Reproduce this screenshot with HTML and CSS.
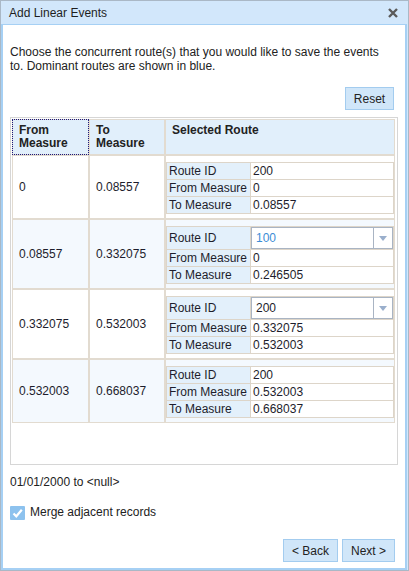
FILE: index.html
```html
<!DOCTYPE html>
<html>
<head>
<meta charset="utf-8">
<title>Add Linear Events</title>
<link rel="stylesheet" href="styles.css">
</head>
<body>
<div class="window">
  <div class="titlebar">
    <span class="title">Add Linear Events</span>
    <svg class="close" width="10" height="10" viewBox="0 0 10 10"><path d="M1 1L9 9M9 1L1 9" stroke="#5a5a5a" stroke-width="2.4" fill="none"/></svg>
  </div>
  <div class="body">
    <p class="intro">Choose the concurrent route(s) that you would like to save the events to. Dominant routes are shown in blue.</p>
    <div class="toolbar"><button class="btn reset">Reset</button></div>
    <div class="frame">
      <table class="grid">
        <colgroup><col class="c1"><col class="c2"><col class="c3"></colgroup>
        <thead>
          <tr><th class="focus">From<br>Measure</th><th>To<br>Measure</th><th>Selected Route</th></tr>
        </thead>
        <tbody>
          <tr>
            <td>0</td><td>0.08557</td>
            <td class="sel">
              <table class="route">
                <tr><td class="lab">Route ID</td><td>200</td></tr>
                <tr><td class="lab">From Measure</td><td>0</td></tr>
                <tr><td class="lab">To Measure</td><td>0.08557</td></tr>
              </table>
            </td>
          </tr>
          <tr class="alt">
            <td>0.08557</td><td>0.332075</td>
            <td class="sel">
              <table class="route">
                <tr class="drop"><td class="lab">Route ID</td><td class="selcell"><div class="select"><span class="val blue">100</span><span class="arrow"><svg width="8" height="5" viewBox="0 0 8 5"><path d="M0 0H8L4 5Z" fill="#9aafcc"/></svg></span></div></td></tr>
                <tr><td class="lab">From Measure</td><td>0</td></tr>
                <tr><td class="lab">To Measure</td><td>0.246505</td></tr>
              </table>
            </td>
          </tr>
          <tr>
            <td>0.332075</td><td>0.532003</td>
            <td class="sel">
              <table class="route">
                <tr class="drop"><td class="lab">Route ID</td><td class="selcell"><div class="select"><span class="val">200</span><span class="arrow"><svg width="8" height="5" viewBox="0 0 8 5"><path d="M0 0H8L4 5Z" fill="#9aafcc"/></svg></span></div></td></tr>
                <tr><td class="lab">From Measure</td><td>0.332075</td></tr>
                <tr><td class="lab">To Measure</td><td>0.532003</td></tr>
              </table>
            </td>
          </tr>
          <tr class="alt">
            <td>0.532003</td><td>0.668037</td>
            <td class="sel">
              <table class="route">
                <tr><td class="lab">Route ID</td><td>200</td></tr>
                <tr><td class="lab">From Measure</td><td>0.532003</td></tr>
                <tr><td class="lab">To Measure</td><td>0.668037</td></tr>
              </table>
            </td>
          </tr>
        </tbody>
      </table>
    </div>
    <div class="date">01/01/2000 to &lt;null&gt;</div>
    <label class="merge">
      <span class="check"><svg width="15" height="14" viewBox="0 0 15 14"><path d="M3.5 7.5L6.3 10.3L11.8 3.8" stroke="#fff" stroke-width="2.2" fill="none"/></svg></span>
      <span class="merge-text">Merge adjacent records</span>
    </label>
    <div class="actions">
      <button class="btn back">&lt; Back</button>
      <button class="btn next">Next &gt;</button>
    </div>
  </div>
</div>
</body>
</html>
```
FILE: styles.css
```css
* { box-sizing: border-box; }
html, body { margin: 0; padding: 0; }
body {
  font-family: "Liberation Sans", Arial, sans-serif;
  font-size: 12px;
  color: #222;
  background: #fff;
}
.window {
  width: 409px;
  height: 571px;
  border: 1px solid #aab8c6;
  background: #d2e7fb;
  display: flex;
  flex-direction: column;
}
.titlebar {
  height: 23px;
  flex: none;
  display: flex;
  align-items: center;
  justify-content: space-between;
  padding: 0 10px 0 8px;
}
.title { color: #1e1e1e; }
.close { display: block; }
.body {
  flex: 1;
  background: #fff;
  border: 2px solid #a6d0f4;
  border-top-width: 1px;
  margin-right: 1px;
  display: flex;
  flex-direction: column;
  padding: 0 7px 6px 7px;
}
.intro {
  margin: 20px 0 0;
  line-height: 14px;
  width: 380px;
}
.toolbar {
  display: flex;
  justify-content: flex-end;
  margin-top: 14px;
  padding-right: 4px;
}
.btn {
  height: 23px;
  background: #d0e6f9;
  border: 1px solid #a3ccef;
  font-family: inherit;
  font-size: 12px;
  color: #222;
  padding: 0;
  border-radius: 0;
}
.reset { width: 49px; }
.frame {
  margin-top: 7px;
  height: 348px;
  flex: none;
  border: 1px solid #d6d6d6;
  padding: 1px 0 0 1px;
}
.grid {
  border-collapse: separate;
  border-spacing: 0;
  width: 383px;
  table-layout: fixed;
}
.c1 { width: 77px; }
.c2 { width: 76px; }
.c3 { width: 230px; }
.grid > thead > tr > th,
.grid > tbody > tr > td {
  border: 1px solid #e2dbd0;
}
.grid > thead > tr > th {
  background: #e1effb;
  text-align: left;
  vertical-align: top;
  font-weight: bold;
  padding: 4px 6px;
  line-height: 13px;
  height: 36px;
}
.grid > thead > tr > th.focus {
  outline: 1px dotted #1a1a80;
  outline-offset: -1px;
}
.grid > tbody > tr > td {
  padding: 0 6px;
  vertical-align: middle;
  color: #1d1d2c;
}
.grid > tbody > tr.alt > td { background: #f4f9fe; }
.grid > tbody > tr > td.sel {
  padding: 6px 0 4px 0;
}
.route {
  width: 100%;
  border-collapse: collapse;
  table-layout: fixed;
}
.route td {
  border: 1px solid #ddd5c9;
  height: 17px;
  padding: 0 2px;
  line-height: 15px;
  background: #fff;
  white-space: nowrap;
  color: #1d1d2c;
}
.route td.lab {
  width: 84px;
  background: #e3f0fb;
}
.route tr.drop td { height: 23px; }
.route td.selcell { padding: 0; }
.select {
  display: flex;
  height: 22px;
  border: 1px solid #a9b4c3;
  background: #fff;
}
.select .val {
  flex: 1;
  padding-left: 4px;
  line-height: 20px;
}
.blue { color: #3c8dd6; }
.select .arrow {
  width: 19px;
  border-left: 1px solid #a9b4c3;
  display: flex;
  align-items: center;
  justify-content: center;
}
.date {
  margin-top: 10px;
  line-height: 14px;
}
.merge {
  display: flex;
  align-items: flex-start;
  gap: 5px;
  margin-top: 17px;
}
.check {
  width: 15px;
  height: 14px;
  background: #8dc2ee;
  border-radius: 1px;
  display: block;
}
.check svg { display: block; }
.merge-text {
  line-height: 12px;
  font-size: 12px;
}
.actions {
  margin-top: auto;
  display: flex;
  justify-content: flex-end;
  gap: 4px;
  padding-right: 3px;
}
.back { width: 55px; }
.next { width: 53px; }
```
